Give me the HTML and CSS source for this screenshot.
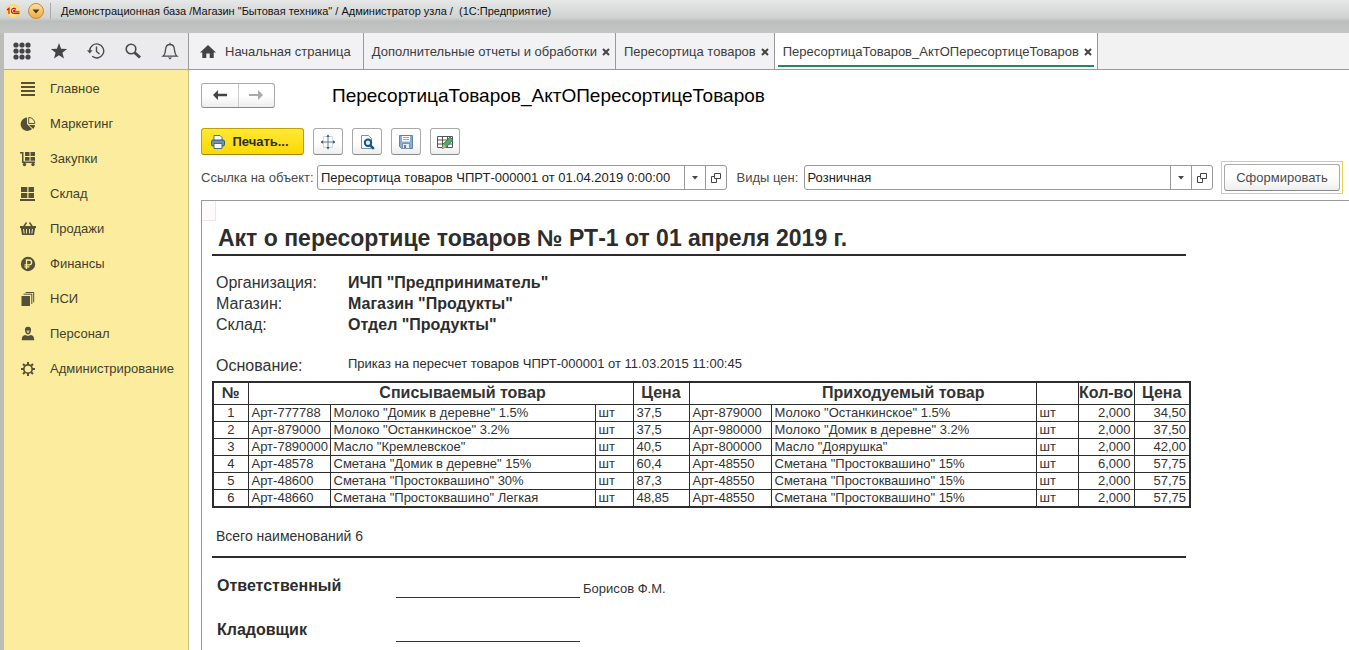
FILE: index.html
```html
<!DOCTYPE html>
<html lang="ru">
<head>
<meta charset="utf-8">
<title>1С:Предприятие</title>
<link rel="stylesheet" href="styles.css">
</head>
<body>
<header class="titlebar">
  <svg class="logo" width="14" height="16" viewBox="0 0 14 16" aria-hidden="true"><defs><radialGradient id="lg"><stop offset="0" stop-color="#fffbd0"/><stop offset="1" stop-color="#fbd460"/></radialGradient></defs><circle cx="7" cy="8" r="7" fill="url(#lg)"/><path d="M1 7 3 5.300V11M10 6.300C8.800 4.800 5.500 5 5.500 7.800c0 2 1.200 2.700 2.500 2.700h5.500M9.300 7.800c-.6-.8-1.800-.5-1.800.2 0 .5.400.8 1 .8h5" fill="none" stroke="#d3161c" stroke-width="1.200"/></svg>
  <button class="sysmenu" aria-label="Меню"><svg width="16" height="16" viewBox="0 0 16 16"><defs><linearGradient id="om" x2="0" y2="1"><stop offset="0" stop-color="#fbe3a2"/><stop offset="1" stop-color="#f0a93c"/></linearGradient></defs><circle cx="8" cy="8" r="7.500" fill="url(#om)" stroke="#c08a3a"/><path d="M4.500 6.500h7L8 10.500z" fill="#54381a"/></svg></button>
  <span class="caption">Демонстрационная база /Магазин "Бытовая техника" / Администратор узла /&nbsp; (1С:Предприятие)</span>
</header>
<div class="app">
  <nav class="tools" aria-label="Инструменты">
    <button aria-label="Функции"><svg width="18" height="18" viewBox="0 0 18 18" fill="#444"><circle cx="3" cy="3" r="2.600"/><circle cx="9" cy="3" r="2.600"/><circle cx="15" cy="3" r="2.600"/><circle cx="3" cy="9" r="2.600"/><circle cx="9" cy="9" r="2.600"/><circle cx="15" cy="9" r="2.600"/><circle cx="3" cy="15" r="2.600"/><circle cx="9" cy="15" r="2.600"/><circle cx="15" cy="15" r="2.600"/></svg></button>
    <button aria-label="Избранное"><svg width="18" height="18" viewBox="0 0 18 18"><path d="m9 1 2.100 5.700 6 .2-4.700 3.800 1.600 5.800L9 13.200l-5 3.300 1.600-5.800L.9 6.900l6-.2z" fill="#444"/></svg></button>
    <button aria-label="История"><svg width="18" height="18" viewBox="0 0 18 18" fill="none" stroke="#4a4a4a" stroke-width="1.400"><path d="M2.700 9a7 7 0 1 1 2.500 5.300M9.500 4.500V9.500l3 2.500"/><path d="M0 8.200h5.600L2.800 11.500z" fill="#4a4a4a" stroke="none"/></svg></button>
    <button aria-label="Поиск"><svg width="18" height="18" viewBox="0 0 18 18" fill="none" stroke="#4a4a4a"><circle cx="7" cy="7" r="4.800" stroke-width="1.600"/><path d="m10.500 10.500 5.500 5" stroke-width="3"/></svg></button>
    <button aria-label="Уведомления"><svg width="18" height="18" viewBox="0 0 18 18" fill="none" stroke="#4a4a4a" stroke-width="1.300"><path d="M2 14.200c2.300-1.800 2.300-4 2.600-7C4.900 4 6.500 2.500 9 2.500s4.100 1.500 4.400 4.700c.3 3 .3 5.200 2.600 7zM9 2.500V.8"/><path d="M6.800 15.500h4.400L9 17.500z" fill="#4a4a4a" stroke="none"/></svg></button>
  </nav>
  <nav class="tabs" aria-label="Открытые окна">
    <a class="tab home" href="#"><svg width="16" height="14" viewBox="0 0 16 14"><path d="M8 0 0 7.500h2.300V13h4V8.500h3.400V13h4V7.500H16z" fill="#444"/></svg>Начальная страница</a>
    <div class="tab"><a href="#">Дополнительные отчеты и обработки</a><button aria-label="Закрыть"><svg width="8" height="8" viewBox="0 0 8 8"><path d="m1 1 6 6M7 1 1 7"/></svg></button></div>
    <div class="tab"><a href="#">Пересортица товаров</a><button aria-label="Закрыть"><svg width="8" height="8" viewBox="0 0 8 8"><path d="m1 1 6 6M7 1 1 7"/></svg></button></div>
    <div class="tab active"><a href="#">ПересортицаТоваров_АктОПересортицеТоваров</a><button aria-label="Закрыть"><svg width="8" height="8" viewBox="0 0 8 8"><path d="m1 1 6 6M7 1 1 7"/></svg></button></div>
  </nav>
  <nav class="sections" aria-label="Разделы">
    <a href="#"><svg width="16" height="16" viewBox="0 0 16 16"><path d="M1 1h14v2H1zM1 5h14v2H1zM1 9h14v2H1zM1 13h14v2H1z"/></svg>Главное</a>
    <a href="#"><svg width="16" height="16" viewBox="0 0 16 16"><path d="M7 1.500V8l5 5A6.700 6.700 0 1 1 7 1.500zM9 9h6c0 1.500-.7 2.700-1.700 3.900z"/><path d="M8.700 1.500v6h6c0-3.500-2.500-6-6-6z" fill="none" stroke="#55503a"/></svg>Маркетинг</a>
    <a href="#"><svg width="16" height="16" viewBox="0 0 16 16"><path d="M0 1h3.500v9.500H15V12H2V2.500H0zM5 1h4.500v4H5zM10.500 1H15v4h-4.500zM5 6h4.500v3.700H5zM10.500 6H15v3.700h-4.500z"/><circle cx="4.500" cy="13.500" r="1.700"/><circle cx="13" cy="13.500" r="1.700"/></svg>Закупки</a>
    <a href="#"><svg width="16" height="16" viewBox="0 0 16 16"><path d="M1 1h6.300v5H1zM8.500 1H14v5H8.500zM1 7h6.300v5H1zM8.500 7H14v5H8.500zM0 13h15v2H0z"/></svg>Склад</a>
    <a href="#"><svg width="16" height="16" viewBox="0 0 16 16"><path d="M0 5h16v2h-.8L14 14H2L.8 7H0z"/><path d="m3.500 6 3-4.500M12.500 6l-3-4.500" stroke="#55503a" stroke-width="1.400"/><path d="m3.500 8 .7 4.500M6.500 8v4.500M9.500 8v4.500M12.500 8l-.7 4.500" stroke="#fced9e" stroke-width=".9"/></svg>Продажи</a>
    <a href="#"><svg width="16" height="16" viewBox="0 0 16 16"><circle cx="8" cy="8" r="7.200"/><path d="M6.500 13V4h2.700a2.300 2.300 0 0 1 0 4.800H4.500M4.500 10.800h5" fill="none" stroke="#fced9e" stroke-width="1.300"/></svg>Финансы</a>
    <a href="#"><svg width="16" height="16" viewBox="0 0 16 16"><path d="M1.500 5H10v10H1.500z"/><path d="M3.500 3.200h8.300v9.800M5.500 1.500h8.200v9.800" fill="none" stroke="#55503a"/></svg>НСИ</a>
    <a href="#"><svg width="16" height="16" viewBox="0 0 16 16"><path d="M8 .8c2.500 0 3.300 1.500 3 3.700C10.700 7 9.500 8.500 8 8.500S5.300 7 5 4.500C4.700 2.300 5.500.8 8 .8zM5.300 9l2.700 1 2.700-1c2.500.6 3.500 1.500 3.500 5.300H1.800C1.800 10.500 2.800 9.600 5.300 9z"/><path d="M6.500 4.500h3L9 6.500l-1 .8-1-.8z" fill="#d8cb8b"/></svg>Персонал</a>
    <a href="#"><svg width="16" height="16" viewBox="0 0 16 16"><g fill="none" stroke="#55503a"><circle cx="8" cy="8" r="4.200" stroke-width="1.700"/><path d="M8 1v2.500M8 12.500V15M1 8h2.500M12.500 8H15M3 3l1.800 1.800M11.200 11.200 13 13M3 13l1.800-1.800M11.200 4.800 13 3" stroke-width="2"/></g></svg>Администрирование</a>
  </nav>
  <main class="work">
    <div class="headline">
      <div class="history">
        <button aria-label="Назад"><svg width="16" height="12" viewBox="0 0 16 12"><path d="M6 1 1 6l5 5V7.200h9V4.800H6z" fill="#444"/></svg></button>
        <button aria-label="Вперед"><svg width="16" height="12" viewBox="0 0 16 12"><path d="m10 1 5 5-5 5V7H1V5h9z" fill="#aaa"/></svg></button>
      </div>
      <h1>ПересортицаТоваров_АктОПересортицеТоваров</h1>
    </div>
    <div class="commands">
      <button class="btn print"><svg width="16" height="16" viewBox="0 0 16 16"><path d="M4 7V1.500h6l2 2V7z" fill="#fff" stroke="#4b6c8c"/><rect x="1.500" y="6" width="13" height="6" rx="1.500" fill="#6f93b5" stroke="#365673"/><path d="M4 9.500h8v5H4z" fill="#fff" stroke="#4b6c8c"/></svg>Печать...</button>
      <button class="btn" aria-label="Область"><svg width="16" height="16" viewBox="0 0 16 16"><path d="M3.500 2.500h9v11h-9z" fill="none" stroke="#9abbd0" stroke-dasharray="1 1"/><path d="M8 1v14M1 8h14" stroke="#5d7c96"/><path d="m6.300 3 1.700-2.500L9.700 3zM6.300 13 8 15.500 9.700 13zM3 6.300.5 8 3 9.700zM13 6.300 15.500 8 13 9.700z" fill="#3c607e"/></svg></button>
      <button class="btn" aria-label="Просмотр"><svg width="16" height="16" viewBox="0 0 16 16"><path d="M2.500 14.500V1.500h7l3 3v10z" fill="#fff" stroke="#7893a8"/><circle cx="9" cy="8.800" r="3.200" fill="#d8eef8" stroke="#17547f" stroke-width="2"/><path d="m11.300 11.300 3.500 3.500" stroke="#17547f" stroke-width="2.500"/></svg></button>
      <button class="btn" aria-label="Сохранить"><svg width="16" height="16" viewBox="0 0 16 16"><path d="M1.500 1.500h13v13h-11l-2-2z" fill="#86aed6" stroke="#5f82a6"/><path d="M4 2h8v5.500H4z" fill="#fff"/><path d="M5 3.500h6M5 5.500h6" stroke="#86aed6"/><path d="M4.500 9.500h7v5h-7z" fill="#e6edf3" stroke="#7893ab"/><path d="M6 11h2v3H6z" fill="#5f82a6"/></svg></button>
      <button class="btn" aria-label="Редактировать"><svg width="16" height="16" viewBox="0 0 16 16"><path d="M.5 2.500h15v11H.5zM.5 6h15M.5 10h15M5.500 2.500v11M10.500 2.500v11" fill="#fff" stroke="#555"/><path d="m5 14.500 1.200-4.500L13 3l3 3-6.500 7z" fill="#55a66b" stroke="#2d7548" stroke-width=".8"/><path d="m5 14.500 1.200-4.500 3.300 3z" fill="#e5a978"/></svg></button>
    </div>
    <form class="params">
      <label for="obj">Ссылка на объект:</label>
      <div class="field"><input id="obj" value="Пересортица товаров ЧПРТ-000001 от 01.04.2019 0:00:00"><button type="button" aria-label="Выбрать"><svg width="6" height="4" viewBox="0 0 6 4"><path d="M0 0h6L3 3.500z" fill="#444"/></svg></button><button type="button" aria-label="Открыть"><svg width="10" height="10" viewBox="0 0 10 10" fill="none" stroke="#444"><path d="M3.500.5h6v5h-6zM3.500 3.500h-3v6h5V5.500"/></svg></button></div>
      <label class="second" for="price">Виды цен:</label>
      <div class="field"><input id="price" value="Розничная"><button type="button" aria-label="Выбрать"><svg width="6" height="4" viewBox="0 0 6 4"><path d="M0 0h6L3 3.500z" fill="#444"/></svg></button><button type="button" aria-label="Открыть"><svg width="10" height="10" viewBox="0 0 10 10" fill="none" stroke="#444"><path d="M3.500.5h6v5h-6zM3.500 3.500h-3v6h5V5.500"/></svg></button></div>
      <div class="focus"><button type="button" class="btn run">Сформировать</button></div>
    </form>
    <section class="sheet">
      <div class="cell-mark"></div>
      <div class="document">
        <h2>Акт о пересортице товаров № РТ-1 от 01 апреля 2019 г.</h2>
        <dl class="details">
          <dt>Организация:</dt><dd>ИЧП "Предприниматель"</dd>
          <dt>Магазин:</dt><dd>Магазин "Продукты"</dd>
          <dt>Склад:</dt><dd>Отдел "Продукты"</dd>
        </dl>
        <dl class="details reason"><dt>Основание:</dt><dd>Приказ на пересчет товаров ЧПРТ-000001 от 11.03.2015 11:00:45</dd></dl>
        <table class="goods">
          <colgroup><col class="c-num"><col class="c-art"><col class="c-name"><col class="c-unit"><col class="c-price"><col class="c-art"><col class="c-name"><col class="c-unit2"><col class="c-price"><col class="c-price"></colgroup>
          <thead><tr><th>№</th><th class="open-r"></th><th class="open-l open-r">Списываемый товар</th><th class="open-l"></th><th>Цена</th><th class="open-r"></th><th class="open-l">Приходуемый товар</th><th></th><th>Кол-во</th><th>Цена</th></tr></thead>
          <tbody>
            <tr><td>1</td><td>Арт-777788</td><td>Молоко "Домик в деревне" 1.5%</td><td>шт</td><td>37,5</td><td>Арт-879000</td><td>Молоко "Останкинское" 1.5%</td><td>шт</td><td>2,000</td><td>34,50</td></tr>
            <tr><td>2</td><td>Арт-879000</td><td>Молоко "Останкинское" 3.2%</td><td>шт</td><td>37,5</td><td>Арт-980000</td><td>Молоко "Домик в деревне" 3.2%</td><td>шт</td><td>2,000</td><td>37,50</td></tr>
            <tr><td>3</td><td>Арт-7890000</td><td>Масло "Кремлевское"</td><td>шт</td><td>40,5</td><td>Арт-800000</td><td>Масло "Доярушка"</td><td>шт</td><td>2,000</td><td>42,00</td></tr>
            <tr><td>4</td><td>Арт-48578</td><td>Сметана "Домик в деревне" 15%</td><td>шт</td><td>60,4</td><td>Арт-48550</td><td>Сметана "Простоквашино" 15%</td><td>шт</td><td>6,000</td><td>57,75</td></tr>
            <tr><td>5</td><td>Арт-48600</td><td>Сметана "Простоквашино" 30%</td><td>шт</td><td>87,3</td><td>Арт-48550</td><td>Сметана "Простоквашино" 15%</td><td>шт</td><td>2,000</td><td>57,75</td></tr>
            <tr><td>6</td><td>Арт-48660</td><td>Сметана "Простоквашино" Легкая</td><td>шт</td><td>48,85</td><td>Арт-48550</td><td>Сметана "Простоквашино" 15%</td><td>шт</td><td>2,000</td><td>57,75</td></tr>
          </tbody>
        </table>
        <p class="total">Всего наименований 6</p>
        <div class="signs">
          <div class="sign"><b>Ответственный</b><span class="line"></span><span>Борисов Ф.М.</span></div>
          <div class="sign"><b>Кладовщик</b><span class="line"></span></div>
        </div>
      </div>
    </section>
  </main>
</div>
</body>
</html>
```
FILE: styles.css
```css
* { box-sizing: border-box; }
body { margin: 0; height: 100vh; display: flex; flex-direction: column; overflow: hidden; background: #fff; color: #333; font: 13px/16px "Liberation Sans", Arial, sans-serif; }
button, input { font: inherit; color: inherit; }
button { padding: 0; border: 0; background: none; display: flex; align-items: center; justify-content: center; }
a { color: inherit; text-decoration: none; }
svg { display: block; flex: none; }

.titlebar { flex: none; height: 33px; padding: 3px 6px 0; display: flex; align-items: flex-start; gap: 8px; background: linear-gradient(#e6e7e7 0, #d0d2d2 18px, #bcbdbd 21px, #c4c5c5 33px); }
.caption { color: #111; font-size: 11px; border-left: 1px solid #aaa; padding-left: 10px; margin-left: -2px; white-space: nowrap; }

.app { flex: 1; min-height: 0; display: grid; grid-template: 37px 1fr / 185px 1fr; border-left: 4px solid #bcbcb8; }
.tools { display: flex; justify-content: space-between; padding: 0 9px; background: #ebebee; border-right: 1px solid #999; border-bottom: 1px solid #aaa; }
.tabs { display: flex; background: #f2f2f2; border-bottom: 1px solid #999; color: #3c3c3c; }
.tab { display: flex; align-items: center; gap: 5px; padding: 1px 5px 0 8px; background: #f2f2f5; border-right: 1px solid #999; white-space: nowrap; }
.tab.home { gap: 9px; padding: 1px 12px 0 11px; }
.tab path { stroke: #444; stroke-width: 2; }
.tab.home path { stroke: none; }
.tab.active { position: relative; background: #fff; }
.tab.active::after { content: ""; position: absolute; left: 3px; right: 3px; bottom: 2px; height: 2px; background: #1f8a5c; }

.sections { padding-top: 1px; background: #fced9e; border-right: 1px solid #c9c08a; color: #433f2c; }
.sections a { display: flex; align-items: center; gap: 14px; height: 35px; padding-left: 16px; }
.sections svg { fill: #55503a; }

.work { min-width: 0; display: flex; flex-direction: column; padding: 12px 0 0 12px; }
.headline { display: flex; align-items: center; gap: 57px; height: 26px; }
.history { display: flex; width: 74px; height: 25px; border: 1px solid #aaa; border-bottom-color: #888; border-radius: 3px; background: linear-gradient(#fff 50%, #eee); }
.history button { flex: 1; }
.history button + button { border-left: 1px solid #ccc; }
h1 { margin: 0; padding-top: 1px; font-size: 19px; line-height: 24px; font-weight: 400; color: #000; white-space: nowrap; }
.commands { display: flex; gap: 9px; margin-top: 20px; }
.btn { width: 30px; height: 27px; border: 1px solid #aaa; border-bottom-color: #888; border-radius: 3px; background: linear-gradient(#fff 50%, #eee); }
.btn.print { width: 103px; gap: 6px; padding-right: 6px; border-color: #bfa100; border-bottom-color: #9c8400; background: linear-gradient(#ffe838, #fbd900); font-weight: 700; color: #2d2d2d; }
.params { display: flex; align-items: center; margin-top: 6px; padding-right: 6px; color: #4a4a4a; white-space: nowrap; }
.params label { width: 116px; }
.params .second { width: 77px; padding-left: 10px; }
.field { flex: 1; min-width: 0; display: flex; height: 25px; border: 1px solid #999; border-radius: 3px; background: #fff; color: #222; }
.field input { flex: 1; min-width: 0; border: 0; padding: 0 3px; background: none; outline: none; }
.field button { width: 21px; border-left: 1px solid #999; }
.focus { margin-left: 8px; padding: 2px; border: 1px solid #e4d34c; }
.btn.run { width: 116px; }

.sheet { position: relative; flex: 1; min-height: 0; margin-top: 6px; border: 1px solid #999; border-width: 1px 0 0 1px; overflow: hidden; }
.cell-mark { position: absolute; top: 0; left: 0; width: 14px; height: 20px; border: 1px solid #eee6e6; border-width: 0 1px 1px 0; background: #fcfafa; }
.document { width: max-content; padding: 23px 0 0 10px; }
h2 { margin: 0 5px 0 0; padding: 0 0 2px 6px; border-bottom: 2px solid #2d2d2d; font-size: 23px; line-height: 28px; color: #2d2d2d; }
.details { margin: 16px 0 0 4px; display: grid; grid-template-columns: 132px 1fr; font-size: 16px; line-height: 21px; }
.details dd { margin: 0; font-weight: 700; color: #2d2d2d; }
.details.reason { margin-top: 20px; }
.details.reason dd { font-size: 13px; line-height: 18px; font-weight: 400; }
.goods { margin-top: 5px; width: 977px; table-layout: fixed; border-collapse: collapse; border: 2px solid #2d2d2d; white-space: nowrap; }
.c-num { width: 35px; }
.c-art { width: 82px; }
.c-name { width: 265px; }
.c-unit { width: 38px; }
.c-unit2 { width: 42px; }
.c-price { width: 56px; }
.goods th, .goods td { border: 1px solid #2d2d2d; padding: 0 3px; }
.goods th { height: 22px; padding: 0; font-size: 16px; line-height: 20px; }
.goods .open-r { border-right: 0; }
.goods .open-l { border-left: 0; }
.goods td { height: 17px; line-height: 16px; }
.goods td:first-child { text-align: center; }
.goods td:nth-child(n+9) { text-align: right; }
.total { margin: 20px 0 0 4px; font-size: 14px; }
.signs { margin: 12px 5px 0 0; padding: 18px 0 0 5px; border-top: 2px solid #2d2d2d; }
.sign { display: flex; height: 44px; }
.sign b { width: 179px; font-size: 16px; line-height: 20px; color: #2d2d2d; }
.sign span { line-height: 26px; }
.sign .line { width: 184px; height: 22px; margin-right: 3px; border-bottom: 1px solid #333; }
```
